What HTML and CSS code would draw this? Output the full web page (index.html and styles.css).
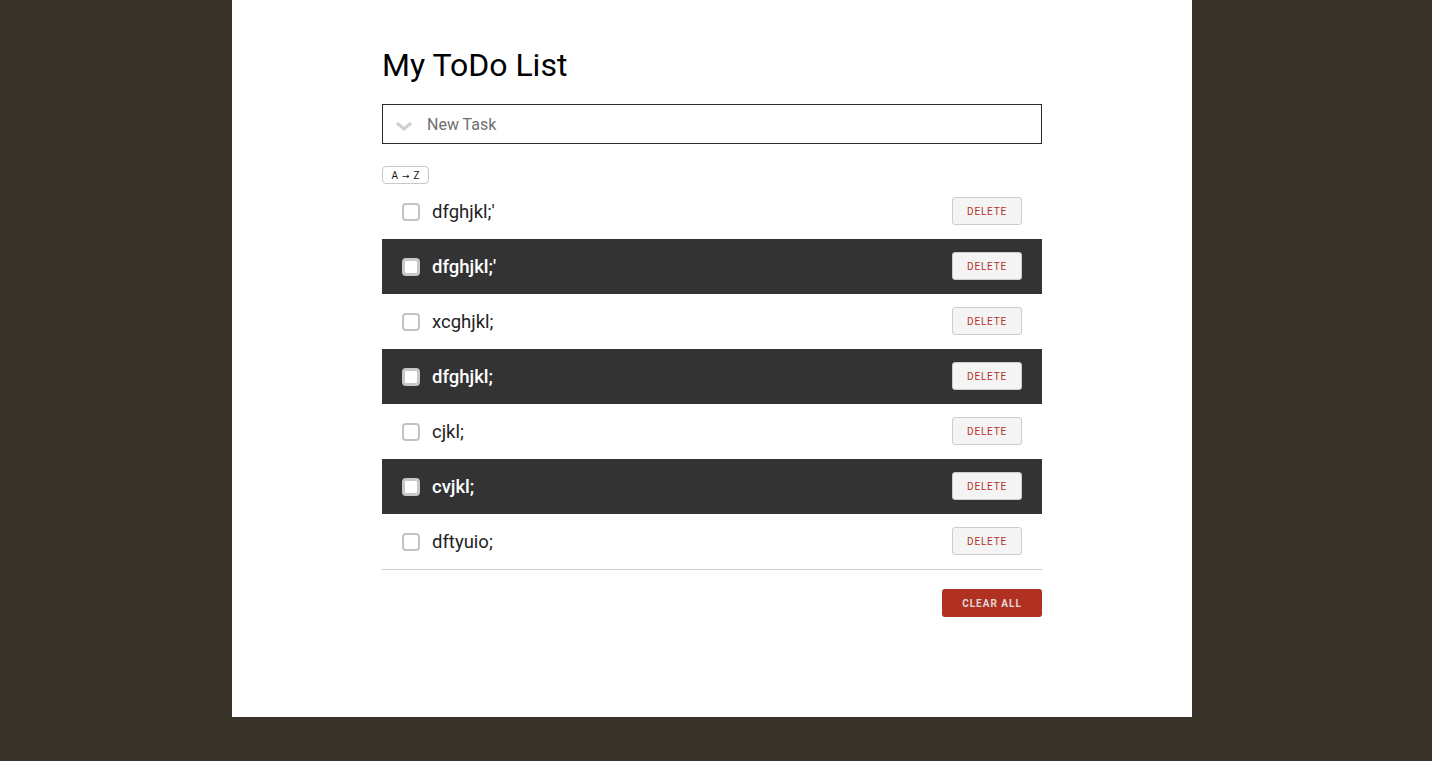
FILE: index.html
```html
<!DOCTYPE html>
<html>
<head>
<meta charset="utf-8">
<link rel="stylesheet" href="styles.css">
</head>
<body>
<div class="panel">
  <div class="content">
    <h1 class="title">My ToDo List</h1>
    <div class="new-task">
      <svg class="chevron" width="18" height="12" viewBox="0 0 18 12"><path d="M2 3 L9 9 L16 3" fill="none" stroke="#cfcfcf" stroke-width="3.2" stroke-linecap="butt"/></svg>
      <span class="placeholder">New Task</span>
    </div>
    <button class="sort">A<span class="arrow">→</span>Z</button>
    <ul class="list">
      <li class="item"><span class="check"></span><span class="label">dfghjkl;'</span><button class="del">DELETE</button></li>
      <li class="item dark"><span class="check"></span><span class="label">dfghjkl;'</span><button class="del">DELETE</button></li>
      <li class="item"><span class="check"></span><span class="label">xcghjkl;</span><button class="del">DELETE</button></li>
      <li class="item dark"><span class="check"></span><span class="label">dfghjkl;</span><button class="del">DELETE</button></li>
      <li class="item"><span class="check"></span><span class="label">cjkl;</span><button class="del">DELETE</button></li>
      <li class="item dark"><span class="check"></span><span class="label">cvjkl;</span><button class="del">DELETE</button></li>
      <li class="item"><span class="check"></span><span class="label">dftyuio;</span><button class="del">DELETE</button></li>
    </ul>
    <div class="footer"><button class="clear">CLEAR ALL</button></div>
  </div>
</div>
</body>
</html>
```
FILE: styles.css
```css
html, body {
  margin: 0;
  padding: 0;
  background: #38342a;
  height: 100%;
}
body {
  font-family: Roboto, "Liberation Sans", sans-serif;
}
.panel {
  width: 960px;
  height: 717px;
  margin-left: 232px;
  background: #fff;
  box-sizing: border-box;
  padding: 0 150px;
}
.content {
  display: flex;
  flex-direction: column;
  align-items: stretch;
}
.title {
  margin: 45px 0 0 0;
  font-size: 32px;
  font-weight: 400;
  line-height: 40px;
  color: #000;
  height: 40px;
}
.new-task {
  margin-top: 19px;
  height: 40px;
  box-sizing: border-box;
  border: 1px solid #2f2b22;
  display: flex;
  align-items: center;
  padding-left: 12px;
}
.chevron {
  margin-top: 3px;
}
.placeholder {
  margin-left: 14px;
  font-size: 16px;
  color: #6f6f6f;
}
.sort {
  align-self: flex-start;
  margin-top: 22px;
  height: 18px;
  width: 47px;
  padding: 0;
  border: 1px solid #c8c8c8;
  border-radius: 4px;
  background: #fff;
  font-family: Roboto, "Liberation Sans", sans-serif;
  font-size: 10px;
  color: #111;
}
.arrow {
  font-family: "DejaVu Sans", sans-serif;
  font-size: 9px;
  margin: 0 4px;
}
.list {
  list-style: none;
  margin: 0;
  padding: 0;
  border-bottom: 1px solid #cccccc;
}
.item {
  height: 55px;
  display: flex;
  align-items: center;
  padding: 0 20px;
  color: #222;
}
.item.dark {
  background: #333333;
  color: #fff;
}
.check {
  width: 18px;
  height: 18px;
  box-sizing: border-box;
  border: 2px solid #c2c2c2;
  border-radius: 4px;
  background: #fff;
  flex: none;
}
.dark .check {
  border-color: #c8c8c8;
  border-width: 3px;
}
.label {
  margin-left: 12px;
  font-size: 18.5px;
  flex: 1;
}
.dark .label {
  font-weight: 500;
}
.del {
  width: 70px;
  height: 28px;
  margin-bottom: 1px;
  padding: 0;
  background: #f4f4f4;
  border: 1px solid #cdcdcd;
  border-radius: 3px;
  color: #b3302a;
  font-family: Roboto, "Liberation Sans", sans-serif;
  font-size: 10px;
  letter-spacing: 0.8px;
}
.footer {
  display: flex;
  justify-content: flex-end;
  margin-top: 19px;
}
.clear {
  width: 100px;
  height: 28px;
  padding: 0;
  border: none;
  border-radius: 3px;
  background: #b03122;
  color: #e2d8d8;
  font-family: Roboto, "Liberation Sans", sans-serif;
  font-size: 10px;
  font-weight: 700;
  letter-spacing: 1px;
}
```
